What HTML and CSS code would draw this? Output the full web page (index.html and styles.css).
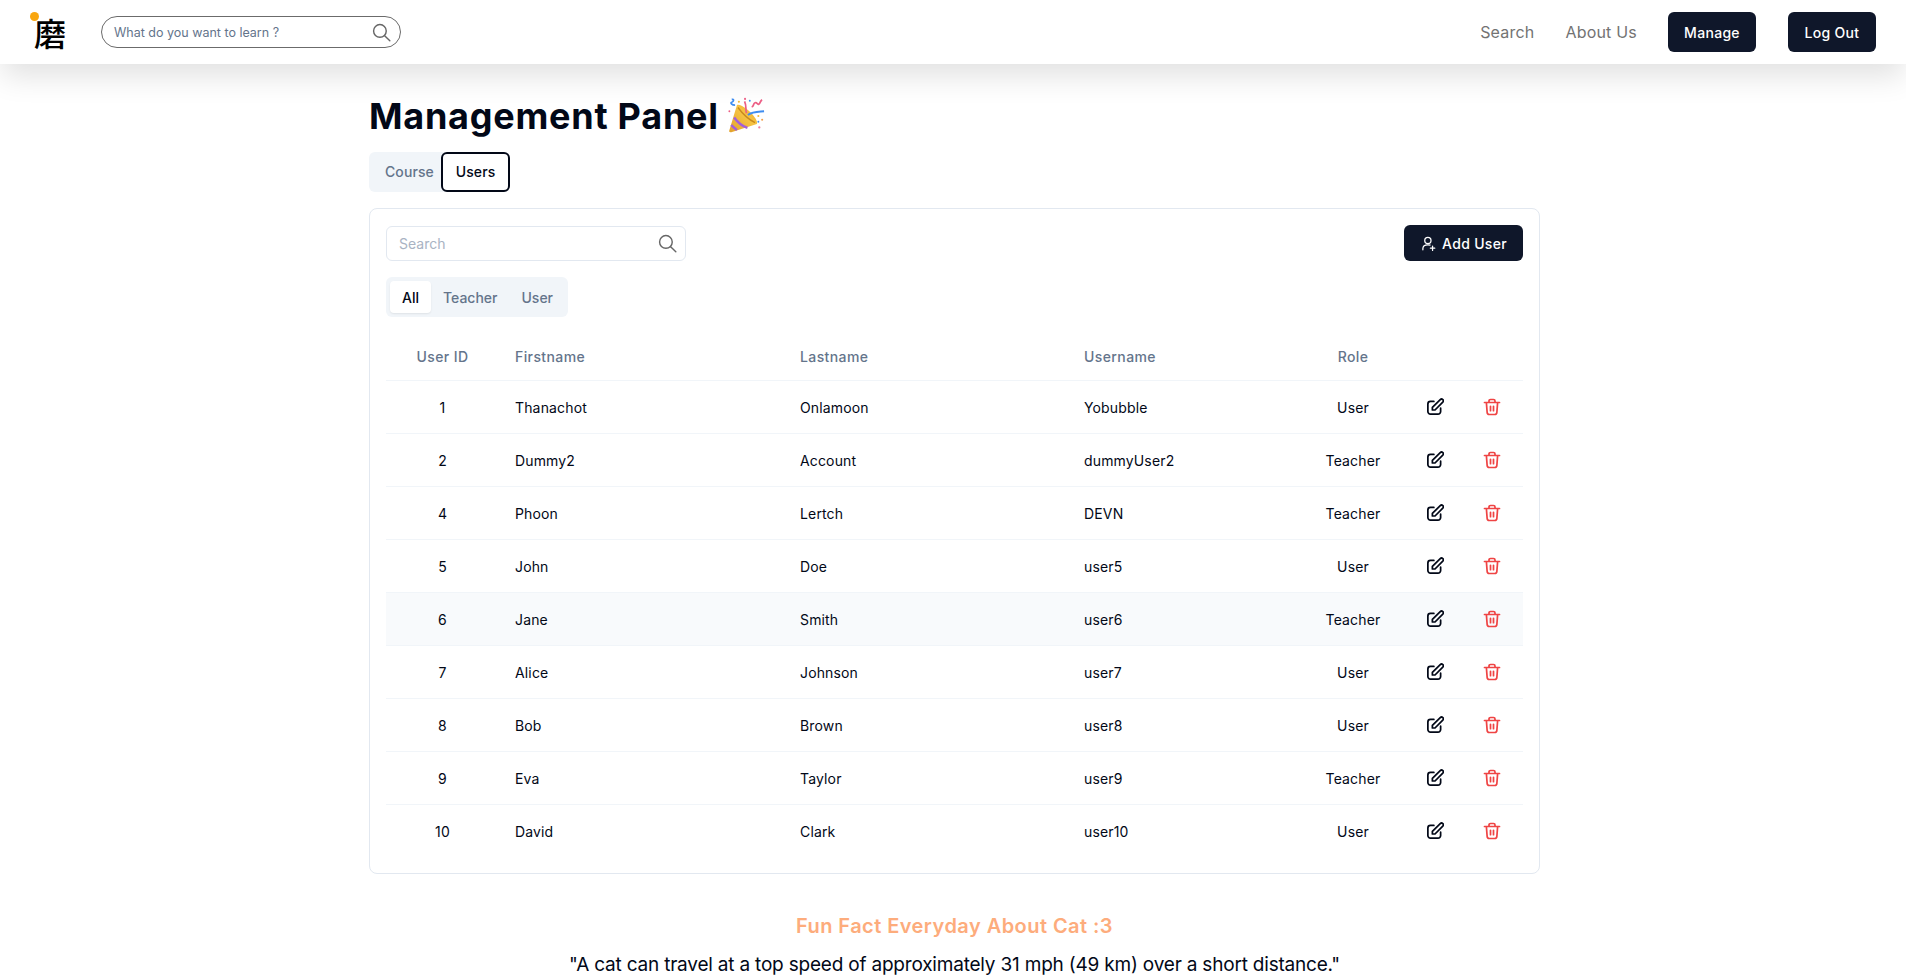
FILE: index.html
```html
<!DOCTYPE html>
<html lang="en">
<head>
  <meta charset="utf-8">
  <title>Management Panel</title>
  <link rel="stylesheet" href="styles.css">
</head>
<body>
  <header class="topbar">
    <div class="topbar-left">
      <div class="logo"><span class="logo-dot"></span>磨</div>
      <div class="learn-search">
        <span>What do you want to learn ?</span>
        <svg class="search-icon" viewBox="0 0 24 24"><circle cx="10" cy="10" r="8"/><path d="M16 16 22.500 22.500"/></svg>
      </div>
    </div>
    <nav class="topbar-right">
      <a class="nav-link">Search</a>
      <a class="nav-link">About Us</a>
      <button class="dark-btn nav-btn">Manage</button>
      <button class="dark-btn nav-btn">Log Out</button>
    </nav>
  </header>

  <main class="content">
    <h1 class="title">Management Panel
      <svg class="popper" viewBox="0 0 40 40">
        <defs>
          <linearGradient id="cone" x1="0" y1="1" x2="1" y2="0">
            <stop offset="0" stop-color="#e2a12a"/>
            <stop offset="0.6" stop-color="#f6c444"/>
            <stop offset="1" stop-color="#e9a92f"/>
          </linearGradient>
        </defs>
        <path d="M2.500 35c-.8 1.500.5 2.500 2 2L31.500 28.500C33 25 27 18 21 13c-4-3.500-9-5.500-10.500-4.500Z" fill="url(#cone)"/>
        <path d="M7.500 21.500c4 5.500 8 9 14 11M4.500 29.500c2 2.500 3.500 3.500 6 5.300" stroke="#a45fd8" stroke-width="2.600" fill="none"/>
        <path d="M11.500 11c3 4 10 12 18 16" stroke="#c98a1e" stroke-width="1.500" fill="none"/>
        <path d="M20.500 17C19 12 21 10 18.500 4.500" stroke="#ec5f86" stroke-width="1.800" fill="none"/>
        <path d="M22 19c5-4 10-3.500 17-4" stroke="#3f8df0" stroke-width="2.200" fill="none"/>
        <path d="M26 10.500c3-1 1-3.500 3.500-4.500s2 2.500 4 1.500 1-3.500 3.500-4.500" stroke="#ec5f86" stroke-width="1.800" fill="none"/>
        <path d="M5 2.500c3-.5 2 2.500 0 3s0 3 3.500 3" stroke="#3f8df0" stroke-width="1.800" fill="none"/>
        <circle cx="12.500" cy="5" r="1.100" fill="#f3b93a"/>
        <circle cx="19" cy="2" r="1.100" fill="#ec5f86"/>
        <circle cx="24" cy="4" r="1" fill="#3f8df0"/>
        <circle cx="2.500" cy="15" r="1" fill="#ec5f86"/>
        <circle cx="33" cy="20" r="1.100" fill="#f3b93a"/>
        <circle cx="37" cy="24" r="1.100" fill="#f3a04a"/>
        <circle cx="33" cy="26" r="1" fill="#3f8df0"/>
        <circle cx="34" cy="32" r="1.200" fill="#ec80a0"/>
      </svg>
    </h1>

    <div class="page-tabs">
      <span class="page-tab">Course</span>
      <span class="page-tab page-tab-active">Users</span>
    </div>

    <section class="card">
      <div class="card-top">
        <div class="table-search">
          <span>Search</span>
          <svg class="search-icon" viewBox="0 0 24 24"><circle cx="10" cy="10" r="8"/><path d="M16 16 22.500 22.500"/></svg>
        </div>
        <button class="dark-btn add-btn">
          <svg class="add-icon" viewBox="0 0 24 24"><circle cx="11" cy="7" r="5"/><path d="M3 22v-2c0-3.500 3-6 8-6 1.500 0 2.500.2 3.500.6M18.500 16v7M15 19.500h7"/></svg>
          Add User
        </button>
      </div>

      <div class="role-tabs">
        <span class="role-tab role-tab-active">All</span>
        <span class="role-tab">Teacher</span>
        <span class="role-tab">User</span>
      </div>

      <table class="users">
        <colgroup>
          <col class="col-id"><col class="col-first"><col class="col-last"><col class="col-username"><col class="col-role"><col class="col-edit"><col>
        </colgroup>
        <thead>
          <tr>
            <th class="center">User ID</th>
            <th>Firstname</th>
            <th>Lastname</th>
            <th>Username</th>
            <th class="center">Role</th>
            <th></th>
            <th></th>
          </tr>
        </thead>
        <tbody id="rows"></tbody>
      </table>
    </section>

    <section class="fact">
      <h2 class="fact-title">Fun Fact Everyday About Cat :3</h2>
      <p class="fact-text">"A cat can travel at a top speed of approximately 31 mph (49 km) over a short distance."</p>
    </section>
  </main>

  <script>
    var users = [
      [1, "Thanachot", "Onlamoon", "Yobubble", "User"],
      [2, "Dummy2", "Account", "dummyUser2", "Teacher"],
      [4, "Phoon", "Lertch", "DEVN", "Teacher"],
      [5, "John", "Doe", "user5", "User"],
      [6, "Jane", "Smith", "user6", "Teacher"],
      [7, "Alice", "Johnson", "user7", "User"],
      [8, "Bob", "Brown", "user8", "User"],
      [9, "Eva", "Taylor", "user9", "Teacher"],
      [10, "David", "Clark", "user10", "User"]
    ];

    var editIcon = '<svg class="row-icon" viewBox="0 0 24 24"><path d="M10.500 4.500H6a3.500 3.500 0 0 0-3.500 3.500v10A3.500 3.500 0 0 0 6 21.500h10a3.500 3.500 0 0 0 3.500-3.500v-4.500"/><path d="M8.500 16v-3.500L19 2.200a2.400 2.400 0 0 1 3.400 3.400L12 16Z"/></svg>';
    var trashIcon = '<svg class="row-icon trash" viewBox="0 0 24 24"><path d="M2 6h20M8 6V4a2 2 0 0 1 2-2h4a2 2 0 0 1 2 2v2M4.500 6l1 13a3 3 0 0 0 3 3h7a3 3 0 0 0 3-3l1-13M10 11v6M14 11v6"/></svg>';

    var html = "";
    for (var i = 0; i < users.length; i++) {
      var u = users[i];
      html += '<tr' + (u[0] == 6 ? ' class="hovered"' : '') + '>' +
        '<td class="center">' + u[0] + '</td>' +
        '<td>' + u[1] + '</td>' +
        '<td>' + u[2] + '</td>' +
        '<td>' + u[3] + '</td>' +
        '<td class="center">' + u[4] + '</td>' +
        '<td class="center">' + editIcon + '</td>' +
        '<td class="center">' + trashIcon + '</td>' +
        '</tr>';
    }
    document.getElementById("rows").innerHTML = html;
  </script>
</body>
</html>
```

FILE: styles.css
```css
* {
  box-sizing: border-box;
}

body {
  margin: 0;
  background-color: #fff;
  color: #020817;
  font-family: Inter, "Noto Sans", sans-serif;
}

.topbar {
  height: 64px;
  display: flex;
  justify-content: space-between;
  align-items: center;
  padding: 0 30px 0 34px;
  background-color: #fff;
  box-shadow: 0 14px 30px -2px rgba(0, 0, 0, 0.12);
}

.topbar-left {
  display: flex;
  align-items: center;
  gap: 35px;
}

.logo {
  position: relative;
  width: 32px;
  font-family: "Noto Sans CJK JP", sans-serif;
  font-size: 32px;
  font-weight: 500;
  line-height: 32px;
  color: #000;
}

.logo-dot {
  position: absolute;
  left: -4px;
  top: -4px;
  width: 9px;
  height: 9px;
  border-radius: 50%;
  background-color: #f9a60f;
}

.learn-search {
  width: 300px;
  height: 32px;
  display: flex;
  justify-content: space-between;
  align-items: center;
  padding: 0 9px 0 12px;
  border: 1px solid #6b6b6b;
  border-radius: 16px;
  font-size: 12.500px;
  color: #64748b;
}

.search-icon {
  width: 19px;
  height: 19px;
  fill: none;
  stroke: #666;
  stroke-width: 1.800;
  stroke-linecap: round;
}

.topbar-right {
  display: flex;
  align-items: center;
}

.nav-link {
  margin-right: 31px;
  font-size: 16px;
  letter-spacing: 0.2px;
  color: #737373;
}

.dark-btn {
  border: 0;
  border-radius: 6px;
  background-color: #0f172a;
  color: #fff;
  font-family: inherit;
  font-size: 14px;
  font-weight: 500;
  letter-spacing: 0.3px;
}

.nav-btn {
  width: 88px;
  height: 40px;
}

.nav-btn + .nav-btn {
  margin-left: 32px;
}

.content {
  width: 1171px;
  margin-left: 369px;
}

.title {
  height: 72px;
  margin: 16px 0 0;
  display: flex;
  align-items: center;
  gap: 8px;
  font-size: 36px;
  font-weight: 700;
  letter-spacing: 0.75px;
}

.popper {
  width: 38px;
  height: 38px;
}

.page-tabs {
  width: 141px;
  height: 40px;
  display: flex;
  align-items: center;
  border-radius: 6px;
  background-color: #f1f5f9;
  font-size: 14px;
  font-weight: 500;
  letter-spacing: 0.1px;
  color: #64748b;
}

.page-tab {
  height: 40px;
  padding: 0 0 1px 16px;
  display: flex;
  align-items: center;
  border-radius: 6px;
}

.page-tab-active {
  flex: none;
  width: 69px;
  justify-content: center;
  margin-left: auto;
  padding: 0 0 1px;
  border: 2px solid #020817;
  background-color: #fff;
  color: #020817;
}

.card {
  height: 666px;
  margin-top: 16px;
  padding: 16px;
  border: 1px solid #e2e8f0;
  border-radius: 8px;
}

.card-top {
  height: 36px;
  display: flex;
  justify-content: space-between;
  align-items: flex-end;
}

.table-search {
  width: 300px;
  height: 35px;
  display: flex;
  justify-content: space-between;
  align-items: center;
  padding: 0 8px 0 12px;
  border: 1px solid #e2e8f0;
  border-radius: 6px;
  font-size: 14px;
  color: #a9b3c3;
}

.add-btn {
  width: 119px;
  height: 36px;
  display: flex;
  justify-content: center;
  align-items: center;
  gap: 6px;
  padding-left: 7px;
}

.add-icon {
  width: 15px;
  height: 17px;
  fill: none;
  stroke: #fff;
  stroke-width: 2;
  stroke-linecap: round;
}

.role-tabs {
  width: 182px;
  height: 40px;
  margin-top: 16px;
  padding: 4px;
  display: flex;
  align-items: center;
  border-radius: 6px;
  background-color: #f1f5f9;
  font-size: 14px;
  font-weight: 500;
  color: #64748b;
}

.role-tab {
  height: 32px;
  padding: 0 12px;
  display: flex;
  align-items: center;
  border-radius: 4px;
}

.role-tab-active {
  background-color: #fff;
  color: #020817;
  box-shadow: 0 1px 2px rgba(0, 0, 0, 0.08);
}

.users {
  width: 1137px;
  margin-top: 16px;
  border-collapse: collapse;
  table-layout: fixed;
  font-size: 14px;
  letter-spacing: 0.15px;
}

.col-id { width: 113px; }
.col-first { width: 285px; }
.col-last { width: 284px; }
.col-username { width: 229px; }
.col-role { width: 112px; }
.col-edit { width: 52px; }

.users th,
.users td {
  height: 53px;
  padding: 1px 16px 0;
  text-align: left;
}

.users th {
  height: 47px;
  font-weight: 500;
  letter-spacing: 0.4px;
  color: #64748b;
}

.users .center {
  padding: 1px 0 0;
  text-align: center;
}

.users tr {
  border-bottom: 1px solid #f1f5f9;
}

.users tbody tr:last-child {
  border-bottom: 0;
}

.users .hovered {
  background-color: #f8fafc;
}

.row-icon {
  display: block;
  width: 18px;
  height: 18px;
  margin: 0 auto;
  fill: none;
  stroke: #020817;
  stroke-width: 2.300;
  stroke-linecap: round;
  stroke-linejoin: round;
}

.row-icon.trash {
  stroke: #ef4444;
}

.fact {
  margin-top: 38px;
  text-align: center;
}

.fact-title {
  margin: 0;
  font-size: 20px;
  font-weight: 600;
  line-height: 28px;
  letter-spacing: 0.45px;
  color: #fdac7c;
}

.fact-text {
  margin: 11px 0 0;
  font-size: 19px;
  line-height: 28px;
  letter-spacing: -0.2px;
}
```
